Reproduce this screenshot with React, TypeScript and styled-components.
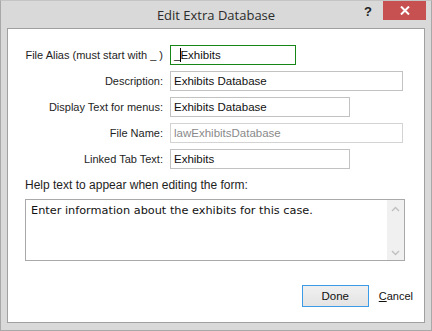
import React from "react";
import styled, { createGlobalStyle } from "styled-components";

const GlobalStyle = createGlobalStyle`
  html, body {
    margin: 0;
    padding: 0;
    background: #d9d9d9;
  }
  * { box-sizing: border-box; }
`;

const Window = styled.div`
  width: 432px;
  height: 331px;
  display: flex;
  flex-direction: column;
  background: #d9d9d9;
  border: 1px solid #a8a8a8;
  border-top-color: #c4c4c4;
  font-family: "Liberation Sans", Arial, sans-serif;
`;

const TitleBar = styled.div`
  height: 27px;
  display: grid;
  grid-template-columns: 1fr auto 1fr;
  align-items: start;
`;

const Title = styled.div`
  grid-column: 2;
  padding-top: 5px;
  font-family: "Open Sans", "Noto Sans", sans-serif;
  font-size: 13px;
  color: #2b2b2b;
`;

const Controls = styled.div`
  grid-column: 3;
  justify-self: end;
  display: flex;
  align-items: flex-start;
  margin-right: 5px;
`;

const HelpGlyph = styled.span`
  font-family: "Liberation Sans", Arial, sans-serif;
  font-weight: bold;
  font-size: 13px;
  color: #222;
  margin: 3px 11px 0 0;
`;

const CloseButton = styled.div`
  width: 43px;
  height: 19px;
  background: #c75050;
  display: flex;
  align-items: center;
  justify-content: center;
`;

const Content = styled.div`
  flex: 1;
  margin: 0 6px 7px 6px;
  background: #fff;
  border: 1px solid #a0a0a0;
  padding: 16px 19px 15px 17px;
  display: flex;
  flex-direction: column;
`;

const Form = styled.div`
  display: grid;
  grid-template-columns: 138px 1fr;
  column-gap: 7px;
  row-gap: 6px;
  align-items: center;
`;

const Label = styled.label`
  text-align: right;
  font-size: 11px;
  color: #1e1e1e;
  white-space: nowrap;
`;

const Field = styled.div<{ w: number; focused?: boolean; disabled?: boolean }>`
  width: ${({ w }) => w}px;
  height: 20px;
  border: 1px solid
    ${({ focused, disabled }) => (focused ? "#168716" : disabled ? "#d3d3d3" : "#c2c2c2")};
  padding: 0 3px;
  display: flex;
  align-items: center;
  font-size: 11.5px;
  color: ${({ disabled }) => (disabled ? "#8a8a8a" : "#111")};
  white-space: nowrap;
  overflow: hidden;
`;

const Caret = styled.span`
  display: inline-block;
  width: 1px;
  height: 14px;
  background: #000;
  margin: 0 -1px 0 0;
`;

const HelpLabel = styled.div`
  margin-top: 9px;
  font-size: 12px;
  color: #1e1e1e;
`;

const TextArea = styled.div`
  margin-top: 7px;
  height: 62px;
  border: 1px solid #a9a9a9;
  display: flex;
`;

const TextBody = styled.div`
  flex: 1;
  padding: 4px 5px;
  font-family: "DejaVu Sans", Verdana, sans-serif;
  font-size: 11.3px;
  color: #111;
`;

const ScrollBar = styled.div`
  width: 17px;
  background: #f0f0f0;
  display: flex;
  flex-direction: column;
  justify-content: space-between;
  align-items: center;
  padding: 6px 0 4px;
`;

const ButtonRow = styled.div`
  margin-top: auto;
  display: flex;
  justify-content: flex-end;
  align-items: center;
  gap: 10px;
  margin-right: -8px;
`;

const DoneButton = styled.button`
  width: 67px;
  height: 22px;
  border: 1px solid #3c9be6;
  background: linear-gradient(#f0f0f0, #e4e4e4);
  font-family: "Liberation Sans", Arial, sans-serif;
  font-size: 11.5px;
  color: #111;
  padding: 0;
`;

const LinkButton = styled.span`
  font-size: 11px;
  color: #111;
  & u { text-decoration: underline; }
`;

const Arrow = ({ up }: { up?: boolean }) => (
  <svg width="9" height="6" viewBox="0 0 9 6">
    <path
      d={up ? "M1 5 L4.5 1.5 L8 5" : "M1 1 L4.5 4.5 L8 1"}
      fill="none"
      stroke="#c0c0c0"
      strokeWidth="1.4"
    />
  </svg>
);

const rows = [
  { label: "File Alias (must start with _ )", value: "Exhibits", w: 126, focused: true },
  { label: "Description:", value: "Exhibits Database", w: 233 },
  { label: "Display Text for menus:", value: "Exhibits Database", w: 180 },
  { label: "File Name:", value: "lawExhibitsDatabase", w: 233, disabled: true },
  { label: "Linked Tab Text:", value: "Exhibits", w: 180 },
];

export default function App() {
  return (
    <>
      <GlobalStyle />
      <Window>
        <TitleBar>
          <Title>Edit Extra Database</Title>
          <Controls>
            <HelpGlyph>?</HelpGlyph>
            <CloseButton>
              <svg width="10" height="9" viewBox="0 0 10 9">
                <path d="M1 0.5 L9 8.5 M9 0.5 L1 8.5" stroke="#fff" strokeWidth="2" />
              </svg>
            </CloseButton>
          </Controls>
        </TitleBar>
        <Content>
          <Form>
            {rows.map((r) => (
              <React.Fragment key={r.label}>
                <Label>{r.label}</Label>
                <Field w={r.w} focused={r.focused} disabled={r.disabled}>
                  {r.focused ? (
                    <>
                      _<Caret />
                      {r.value}
                    </>
                  ) : (
                    r.value
                  )}
                </Field>
              </React.Fragment>
            ))}
          </Form>
          <HelpLabel>Help text to appear when editing the form:</HelpLabel>
          <TextArea>
            <TextBody>Enter information about the exhibits for this case.</TextBody>
            <ScrollBar>
              <Arrow up />
              <Arrow />
            </ScrollBar>
          </TextArea>
          <ButtonRow>
            <DoneButton>Done</DoneButton>
            <LinkButton>
              <u>C</u>ancel
            </LinkButton>
          </ButtonRow>
        </Content>
      </Window>
    </>
  );
}
